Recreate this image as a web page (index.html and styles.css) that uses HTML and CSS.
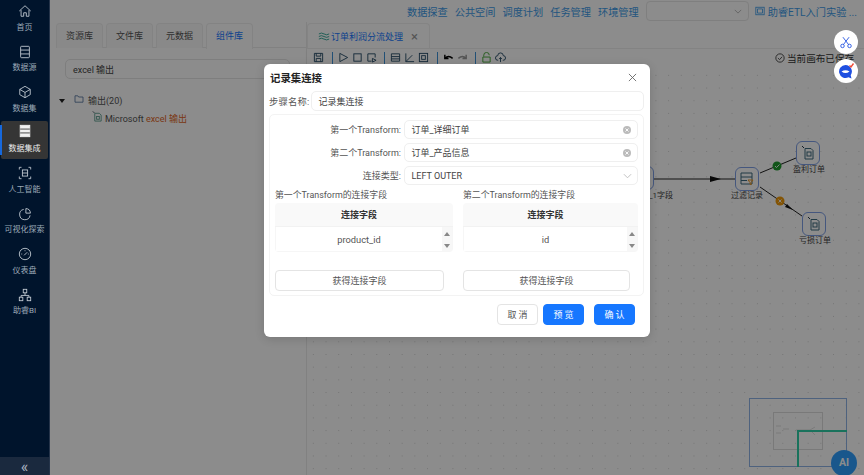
FILE: index.html
```html
<!DOCTYPE html>
<html lang="zh">
<head>
<meta charset="utf-8">
<title>订单利润分流处理</title>
<link rel="stylesheet" href="styles.css">
</head>
<body>
<div class="app">
  <aside class="sidebar">
    <nav class="side-items">
      <a class="side-item"><svg viewBox="0 0 16 16"><path d="M1.500 8 8 2l6.500 6M3.500 7v7h3v-4h3v4h3V7"/></svg><span>首页</span></a>
      <a class="side-item"><svg viewBox="0 0 16 16"><rect x="3" y="1.500" width="10" height="13" rx="1"/><path d="M3 5.800h10M3 10.200h10"/></svg><span>数据源</span></a>
      <a class="side-item"><svg viewBox="0 0 16 16"><path d="M8 1.500 14 5v6l-6 3.500L2 11V5zM2 5l6 3.500L14 5M8 8.500v6"/></svg><span>数据集</span></a>
      <a class="side-item active"><svg viewBox="0 0 16 16"><rect x="2.500" y="1.500" width="11" height="13" class="solid"/><path d="M2.500 5.800h11M2.500 10.200h11" class="cut"/></svg><span>数据集成</span></a>
      <a class="side-item"><svg viewBox="0 0 16 16"><path d="M1.500 4V1.500H4M12 1.500h2.500V4M14.500 12v2.500H12M4 14.500H1.500V12"/><rect x="5" y="4.500" width="6" height="7"/><path d="M5 8h6"/></svg><span>人工智能</span></a>
      <a class="side-item"><svg viewBox="0 0 16 16"><path d="M13.800 9.500A6 6 0 1 1 6.500 2.700M9 1.800a5.500 5.500 0 0 1 5.200 5.200H9z"/></svg><span>可视化探索</span></a>
      <a class="side-item"><svg viewBox="0 0 16 16"><circle cx="8" cy="8" r="6.500"/><path d="m7 9.500 3.500-3.500M3.800 8h1M11.300 8h1M8 3.800v1"/></svg><span>仪表盘</span></a>
      <a class="side-item"><svg viewBox="0 0 16 16"><rect x="6" y="1.500" width="4" height="4"/><rect x="1.500" y="10.500" width="4" height="4"/><rect x="10.500" y="10.500" width="4" height="4"/><path d="M8 5.500v3M3.500 10.500v-2h9v2"/></svg><span>助睿BI</span></a>
    </nav>
    <div class="collapse">«</div>
  </aside>

  <div class="main">
    <header class="topnav">
      <a>数据探查</a><a>公共空间</a><a>调度计划</a><a>任务管理</a><a>环境管理</a>
      <div class="env-select"><svg viewBox="0 0 10 6"><path d="m1 1 4 4 4-4"/></svg></div>
      <div class="project"><svg viewBox="0 0 12 12"><rect x="1" y="1.500" width="10" height="9"/><path d="M3 3.500h6v5H3z"/></svg><span>助睿ETL入门实验 ...</span></div>
    </header>
    <div class="body">
      <section class="panel">
        <div class="tabs">
          <div class="tab">资源库</div>
          <div class="tab">文件库</div>
          <div class="tab">元数据</div>
          <div class="tab current">组件库</div>
        </div>
        <div class="search"><span>excel 输出</span><i class="search-clear"></i></div>
        <div class="tree">
          <div class="tree-row">
            <i class="caret"></i>
            <svg class="folder" viewBox="0 0 12 10"><path d="M1 1h3.500l1 1.500H11V9H1z"/></svg>
            <span>输出(20)</span>
          </div>
          <div class="tree-leaf">
            <svg class="leaf" viewBox="0 0 12 12"><path d="M3 2.500h5l2 2v6.500H3z"/><path d="m1 .5 1.500 1.500" class="dark"/><rect x="5" y="6" width="3" height="3"/></svg>
            <span>Microsoft <em>excel 输出</em></span>
          </div>
        </div>
      </section>
      <section class="work">
        <div class="doc-tabs">
          <div class="doc-tab">
            <svg viewBox="0 0 14 10"><path d="M1 2q3-2 6 0t6 0M1 5q3-2 6 0t6 0M1 8q3-2 6 0t6 0"/></svg>
            <span>订单利润分流处理</span><b>×</b>
          </div>
        </div>
        <div class="toolbar">
          <svg viewBox="0 0 12 12"><path d="M1.500 1.500h9v9h-9zM3.500 1.500v3h5v-3M3.500 10.500V7h5v3.500"/></svg>
          <i class="sep"></i>
          <svg viewBox="0 0 12 12"><path d="M2 1.500 10.500 6 2 10.500z"/></svg>
          <svg viewBox="0 0 12 12"><rect x="2" y="2" width="8" height="8"/></svg>
          <svg viewBox="0 0 12 12"><path d="M10 6V2H2v8h4M7 7l4 2-4 2z"/></svg>
          <i class="sep"></i>
          <svg viewBox="0 0 12 12"><path d="M1.500 2h9v8h-9zM1.500 5h9M1.500 7.500h9"/></svg>
          <svg viewBox="0 0 12 12"><path d="M2 1.500v9h9M2 10.500 9 3.500"/></svg>
          <svg viewBox="0 0 12 12"><rect x="1.500" y="1.500" width="9" height="9"/><rect x="4" y="4" width="4" height="4"/></svg>
          <i class="sep"></i>
          <svg viewBox="0 0 12 12" class="ink"><path d="M2 3v4h4M2 7q4-4 8.500 0" class="thick"/></svg>
          <svg viewBox="0 0 12 12" class="muted"><path d="M10 3v4H6M10 7Q6 3 1.500 7" class="thick"/></svg>
          <i class="sep"></i>
          <svg viewBox="0 0 12 12" class="green"><path d="M3 5V3.500a3 3 0 0 1 6 0M2 5.500h8V11H2z"/></svg>
          <svg viewBox="0 0 12 12"><path d="M3.500 9H3a2.500 2.500 0 0 1 0-5 3 3 0 0 1 6 0 2.500 2.500 0 0 1 0 5h-.5M6 11V6M4.500 7.500 6 6l1.500 1.500"/></svg>
          <div class="saved"><svg viewBox="0 0 12 12"><circle cx="6" cy="6" r="5"/><path d="m3.500 6 2 2 3-3.500"/></svg><span>当前画布已保存</span></div>
        </div>
        <div class="canvas">
          <svg class="edges" viewBox="0 0 558 405">
            <path d="M347 110H428M453 104 489 89M453 118 495 147"/>
            <path d="M403 107l11 3-11 3zM486 141l-8-3 2-3z" class="arrow"/>
            <circle cx="470" cy="97" r="4.500" class="ok"/>
            <circle cx="473" cy="132" r="4.500" class="warn"/>
            <path d="m468 97 1.500 1.500 3-3M471.500 130.500l3 3M474.500 130.500l-3 3" class="mark"/>
          </svg>
          <div class="node partial"></div>
          <span class="node-label lbl0">_1字段</span>
          <div class="node n-filter"><svg viewBox="0 0 16 16"><path d="M2 2h11v11H2zM2 6h11M2 9.500h6"/><path d="M9 9h5l-2 2.500V14l-1-1v-1.500z" class="orange"/></svg></div>
          <span class="node-label lbl1">过滤记录</span>
          <div class="node n-profit"><svg viewBox="0 0 16 16"><path d="M5 3.500h6l2 2V14H5z"/><path d="m2 1 2 2" class="dark"/><rect x="7" y="7" width="4" height="4"/></svg></div>
          <span class="node-label lbl2">盈利订单</span>
          <div class="node n-loss"><svg viewBox="0 0 16 16"><path d="M5 3.500h6l2 2V14H5z"/><path d="m2 1 2 2" class="dark"/><rect x="7" y="7" width="4" height="4"/></svg></div>
          <span class="node-label lbl3">亏损订单</span>
          <div class="minimap">
            <div class="mini-inner">
              <svg class="mini-flow" viewBox="0 0 50 38"><path d="M2 13h5M2 20h5M9 16h6M22 17h14M36 17l5-3M36 17l5 5"/></svg>
            </div>
            <i class="mini-h"></i><i class="mini-v"></i>
          </div>
          <div class="ai">AI</div>
        </div>
      </section>
    </div>
    <div class="scrim"></div>
  </div>

  <div class="float-btn fb1"><svg viewBox="0 0 16 16"><circle cx="4" cy="12.500" r="2"/><circle cx="12" cy="12.500" r="2"/><path d="M5 11 11.500 2.500M11 11 4.500 2.500"/></svg></div>
  <div class="float-btn fb2"><svg viewBox="0 0 18 18"><path d="M8.500 3a6.500 6.500 0 1 0 3 12.300l3 1.200-.8-3.300A6.500 6.500 0 0 0 8.500 3z" class="fill"/><path d="M4.500 9.500q4-2.500 8 0-4 3-8 0z" class="white"/><path d="m12.500 3.500 1.500 1.500 2.500-3.500" class="red"/></svg></div>

  <div class="modal">
    <div class="modal-head"><h2>记录集连接</h2><svg viewBox="0 0 10 10"><path d="m1 1 8 8M9 1 1 9"/></svg></div>
    <div class="step-row">
      <label>步骤名称:</label>
      <div class="input">记录集连接</div>
    </div>
    <div class="group">
      <div class="form-row"><label>第一个Transform:</label><div class="input"><span>订单_详细订单</span><svg class="clear" viewBox="0 0 8 8"><circle cx="4" cy="4" r="4"/><path d="m2.500 2.500 3 3M5.500 2.500l-3 3"/></svg></div></div>
      <div class="form-row"><label>第二个Transform:</label><div class="input"><span>订单_产品信息</span><svg class="clear" viewBox="0 0 8 8"><circle cx="4" cy="4" r="4"/><path d="m2.500 2.500 3 3M5.500 2.500l-3 3"/></svg></div></div>
      <div class="form-row"><label>连接类型:</label><div class="input"><span>LEFT OUTER</span><svg class="chev" viewBox="0 0 10 6"><path d="m1 1 4 4 4-4"/></svg></div></div>
      <div class="cols">
        <div class="col col-a">
          <div class="col-title">第一个Transform的连接字段</div>
          <div class="table">
            <div class="th">连接字段</div>
            <div class="tbody"><div class="td">product_id</div><div class="scroll"><i class="up"></i><i class="down"></i></div></div>
          </div>
          <button class="btn wide">获得连接字段</button>
        </div>
        <div class="col col-b">
          <div class="col-title">第二个Transform的连接字段</div>
          <div class="table">
            <div class="th">连接字段</div>
            <div class="tbody"><div class="td">id</div><div class="scroll"><i class="up"></i><i class="down"></i></div></div>
          </div>
          <button class="btn wide">获得连接字段</button>
        </div>
      </div>
    </div>
    <div class="modal-foot">
      <button class="btn">取 消</button>
      <button class="btn primary">预 览</button>
      <button class="btn primary last">确 认</button>
    </div>
  </div>
</div>
</body>
</html>
```
FILE: styles.css
```css
* { box-sizing: border-box; }
html, body { margin: 0; height: 100%; overflow: hidden; }
body { font-family: Roboto, "Noto Sans CJK SC", sans-serif; font-size: 9.500px; color: #444; }
svg { fill: none; stroke: currentColor; stroke-width: 1; display: block; }

.app { position: relative; display: flex; width: 864px; height: 475px; background: #fff; }

/* sidebar */
.sidebar { width: 50px; flex: none; display: flex; flex-direction: column; justify-content: space-between; background: #00142c; border-right: 1px solid #25344a; position: relative; z-index: 3; }
.side-items { display: flex; flex-direction: column; padding-top: 4px; }
.side-item { height: 40.500px; display: flex; flex-direction: column; align-items: center; color: #9daab8; font-size: 8px; line-height: 11px; position: relative; margin: 0 1px; }
.side-item svg { width: 14px; height: 14px; margin-bottom: 3.500px; color: #c4ccd4; }
.side-item.active { background: #353535; border-radius: 2px; height: 38px; margin: -5px 1px 7.500px; color: #eee; padding-top: 3.500px; }
.side-item.active svg { color: #f0f0f0; margin-bottom: 4.500px; }
.side-item.active::before { content: ""; position: absolute; left: -1px; top: 4px; bottom: 4px; width: 2px; background: #1668dc; }
.solid { fill: #f0f0f0; }
.cut { stroke: #353535; }
.collapse { height: 18px; background: #1a293e; color: #aab4c0; font-size: 16px; line-height: 19px; text-align: center; }

/* main */
.main { position: relative; flex: 1; min-width: 0; display: flex; flex-direction: column; background: #fff; }
.scrim { position: absolute; inset: 0; background: rgba(0, 0, 0, .45); z-index: 2; }
.topnav { height: 22px; flex: none; display: flex; align-items: center; padding-left: 357px; font-size: 10.200px; color: #3d9be8; }
.topnav a { margin-right: 7px; white-space: nowrap; }
.env-select { width: 103px; height: 20px; margin-right: 6px; border: 1px solid #e8e8e8; border-radius: 4px; display: flex; align-items: center; justify-content: flex-end; padding-right: 6px; color: #aaa; }
.env-select svg { width: 8px; height: 5px; }
.project { display: flex; align-items: center; gap: 3px; white-space: nowrap; }
.project svg { width: 10px; height: 10px; }
.body { flex: 1; display: flex; min-height: 0; }

/* left panel */
.panel { width: 257px; flex: none; padding: 1px 0 0 6px; border-right: 1px solid #ececec; }
.tabs { display: flex; gap: 3px; border-bottom: 1px solid #ececec; height: 25px; }
.tab { width: 47px; height: 25px; background: #fafafa; border: 1px solid #efefef; border-bottom: 0; border-radius: 4px 4px 0 0; text-align: center; line-height: 24px; font-size: 9px; color: #555; }
.tab.current { background: #fff; color: #1677ff; height: 26px; }
.search { margin: 11px 0 0 9px; width: 225px; height: 20px; border: 1px solid #e6e6e6; border-radius: 5px; padding: 0 3px 0 7px; display: flex; align-items: center; justify-content: space-between; font-size: 9px; color: #444; }
.search-clear { width: 7px; height: 7px; border-radius: 50%; background: #aaa; }
.tree { margin-top: 13px; font-size: 9px; color: #555; }
.tree-row { display: flex; align-items: center; height: 17px; padding-left: 3px; }
.caret { width: 0; height: 0; border: 3px solid transparent; border-top: 4px solid #222; border-bottom: 0; margin-right: 9px; }
.folder { width: 10px; height: 8px; margin-right: 4px; color: #4b6d99; position: relative; top: -2px; }
.tree-leaf { display: flex; align-items: center; height: 18px; padding-left: 36px; }
.leaf { width: 11px; height: 11px; color: #5f9f90; margin-right: 2px; position: relative; top: -2px; }
em { font-style: normal; color: #e0641e; }

/* workspace */
.work { flex: 1; min-width: 0; display: flex; flex-direction: column; }
.doc-tabs { height: 27px; flex: none; border-bottom: 1px solid #eee; padding-top: 1px; }
.doc-tab { width: 123px; height: 26px; border: 1px solid #f0f0f0; border-bottom: 0; border-radius: 4px 4px 0 0; display: flex; align-items: center; padding-left: 10px; color: #1677ff; font-size: 9px; }
.doc-tab svg { width: 12px; height: 9px; color: #21a08f; margin-right: 1px; flex: none; }
.doc-tab span { white-space: nowrap; }
.doc-tab b { font-weight: 400; color: #999; margin-left: 8px; font-size: 13px; }
.toolbar { height: 20px; flex: none; display: flex; align-items: center; gap: 3px; padding: 0 0 3px 6px; color: #244a66; box-shadow: 0 2px 3px rgba(0,0,0,.06); position: relative; }
.toolbar > svg { width: 11px; height: 11px; flex: none; }
.sep { width: 1px; height: 12px; background: #3f92d8; margin: 0 2px 0 4.500px; flex: none; }
.thick { stroke-width: 1.600; }
.ink { color: #000; }
.muted { color: #999; }
.green { color: #3ea52f; }
.saved { margin-left: auto; display: flex; align-items: center; gap: 2px; color: #333; font-size: 9.600px; white-space: nowrap; width: 89px; overflow: hidden; }
.saved svg { width: 10px; height: 10px; flex: none; }

.canvas { flex: 1; position: relative; background-color: #fff; background-image: radial-gradient(circle, #d4d4d4 .6px, transparent .8px); background-size: 12.700px 12.700px; overflow: hidden; }
.edges { position: absolute; left: 0; top: 0; width: 558px; height: 405px; stroke: #222; }
.arrow { fill: #111; stroke: none; }
.ok { fill: #1f9b2f; stroke: none; }
.warn { fill: #ee9a0a; stroke: none; }
.mark { stroke: #fff; stroke-width: .9; }
.node { position: absolute; width: 24px; height: 24px; border: 1px solid #7e9fe6; border-radius: 6px; background: #fff; padding: 3px; color: #3c6a7e; }
.node svg { width: 16px; height: 16px; }
.orange { stroke: #ec9b2c; }
.dark { stroke: #234; }
.partial { left: 320px; top: 97px; width: 27px; height: 24px; }
.n-filter { left: 428px; top: 98px; }
.n-profit { left: 489px; top: 72px; }
.n-loss { left: 495px; top: 143px; }
.node-label { position: absolute; font-size: 8px; line-height: 11px; color: #444; white-space: nowrap; }
.lbl0 { left: 342px; top: 121px; }
.lbl1 { left: 424px; top: 121px; }
.lbl2 { left: 486px; top: 95px; }
.lbl3 { left: 492px; top: 166px; }
.minimap { position: absolute; left: 442px; top: 329px; width: 98px; height: 69px; border: 1px solid #8fb3e6; }
.mini-inner { position: absolute; left: 23px; top: 13px; width: 50px; height: 38px; border: 1px solid #ddd; }
.mini-flow { width: 50px; height: 38px; stroke: #c9c9c9; stroke-width: .6; }
.mini-h { position: absolute; left: 47px; top: 31px; width: 50px; height: 2px; background: #2fcfa8; }
.mini-v { position: absolute; left: 47px; top: 31px; width: 2px; height: 37px; background: #2fcfa8; }
.ai { position: absolute; left: 524px; top: 381px; width: 26px; height: 26px; border-radius: 50%; background: #2f9fff; color: #fff; font-weight: 700; font-size: 10.500px; line-height: 26px; text-align: center; }

/* floating buttons */
.float-btn { position: absolute; left: 834px; width: 24px; height: 24px; border-radius: 50%; background: #fff; z-index: 4; display: flex; align-items: center; justify-content: center; color: #1f4fe0; }
.fb1 { top: 30px; }
.fb2 { top: 59px; }
.float-btn svg { width: 14px; height: 14px; }
.fb2 svg { width: 18px; height: 18px; }
.fb2 .fill { fill: #1f4fe0; stroke: none; }
.white { fill: #fff; stroke: none; }
.red { stroke: #ef4d3a; stroke-width: 1.400; }

/* modal */
.modal { position: absolute; left: 264px; top: 64px; width: 386px; height: 273px; background: #fff; border-radius: 6px; z-index: 5; padding: 0 6px 0 5px; color: #444; box-shadow: 0 2px 10px rgba(0,0,0,.15); }
.modal-head { height: 27px; display: flex; align-items: center; justify-content: space-between; padding: 0 7px 1px 1px; }
.modal-head h2 { margin: 0; font-size: 10.400px; font-weight: 700; color: #222; }
.modal-head svg { width: 9px; height: 9px; color: #666; }
label { white-space: nowrap; }
.input { border: 1px solid #efefef; border-radius: 5px; height: 19.500px; display: flex; align-items: center; justify-content: space-between; padding: 0 6.500px; font-size: 9px; color: #444; }
.step-row { display: flex; align-items: center; height: 20px; }
.step-row label { width: 42px; flex: none; font-size: 9.300px; color: #555; letter-spacing: .2px; }
.step-row .input { flex: 1; }
.group { margin-top: 3px; height: 182px; border: 1px solid #f3f3f3; border-radius: 5px; padding: 3px 5px 0; }
.form-row { display: flex; align-items: center; justify-content: flex-end; height: 23px; }
.form-row label { margin-right: 3px; font-size: 9px; color: #555; }
.form-row .input { width: 234px; }
.clear { width: 8px; height: 8px; flex: none; stroke: #fff; stroke-width: .9; }
.clear circle { fill: #bbb; stroke: none; }
.chev { width: 9px; height: 6px; color: #bbb; margin-right: -1px; }
.cols { display: flex; gap: 10px; margin-top: 2px; }
.col { display: flex; flex-direction: column; }
.col-a { width: 178px; }
.col-b { width: 175px; }
.col-title { font-size: 8.900px; line-height: 13px; color: #555; height: 14px; white-space: nowrap; }
.table { height: 49px; border-radius: 4px; overflow: hidden; }
.th { height: 24px; background: #f9f9f9; text-align: center; line-height: 24px; padding-right: 10px; font-weight: 700; font-size: 9px; color: #333; border-bottom: 1px solid #f2f2f2; }
.tbody { height: 25px; display: flex; border: 1px solid #f6f6f6; border-top: 0; }
.td { flex: 1; text-align: center; line-height: 25px; font-size: 9.300px; color: #555; }
.scroll { width: 10px; background: #f7f7f7; display: flex; flex-direction: column; align-items: center; justify-content: space-between; padding: 5px 0 3px; }
.up, .down { width: 0; height: 0; border: 3px solid transparent; }
.up { border-bottom: 4px solid #888; border-top: 0; }
.down { border-top: 4px solid #888; border-bottom: 0; }
.btn { font: inherit; font-size: 9px; height: 21px; padding: 0; width: 41px; background: #fff; border: 1px solid #e4e4e4; border-radius: 4px; color: #555; }
.wide { width: 169px; margin-top: 18px; height: 21px; }
.col-b .wide { width: 167px; }
.modal-foot { display: flex; justify-content: flex-end; gap: 5px; margin-top: 8px; padding-right: 9px; }
.primary { background: #1677ff; border-color: #1677ff; color: #fff; }
.last { margin-left: 5px; }
```
